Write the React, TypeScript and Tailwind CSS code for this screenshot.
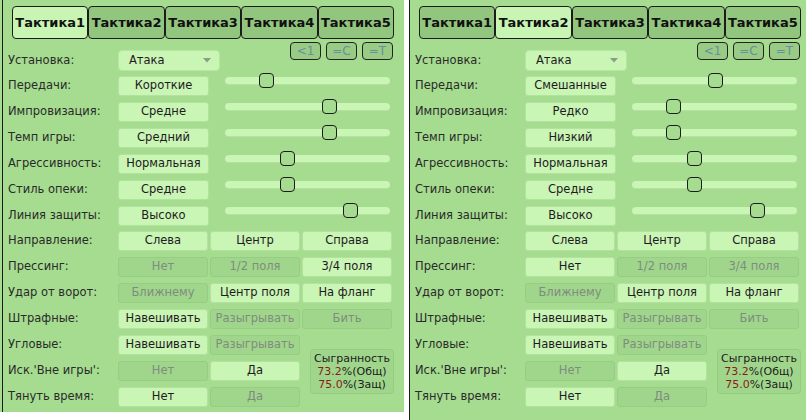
import React from "react";

type Btn = [string, boolean];

type PanelData = {
  active: number;
  upper: { label: string; value: string; pos: number }[];
  lower: { label: string; btns: Btn[] }[];
};

const LIGHT =
  "bg-[#c9f5b5] border border-[#b3e29f] text-[#1f1a1f]";
const DIS =
  "bg-[#a0d68b] border border-[#97cc83] text-[#7f8c7f]";

const left: PanelData = {
  active: 0,
  upper: [
    { label: "Передачи:", value: "Короткие", pos: 0 },
    { label: "Импровизация:", value: "Средне", pos: 3 },
    { label: "Темп игры:", value: "Средний", pos: 3 },
    { label: "Агрессивность:", value: "Нормальная", pos: 1 },
    { label: "Стиль опеки:", value: "Средне", pos: 1 },
    { label: "Линия защиты:", value: "Высоко", pos: 4 },
  ],
  lower: [
    { label: "Направление:", btns: [["Слева", true], ["Центр", true], ["Справа", true]] },
    { label: "Прессинг:", btns: [["Нет", false], ["1/2 поля", false], ["3/4 поля", true]] },
    { label: "Удар от ворот:", btns: [["Ближнему", false], ["Центр поля", true], ["На фланг", true]] },
    { label: "Штрафные:", btns: [["Навешивать", true], ["Разыгрывать", false], ["Бить", false]] },
    { label: "Угловые:", btns: [["Навешивать", true], ["Разыгрывать", false]] },
    { label: "Иск.'Вне игры':", btns: [["Нет", false], ["Да", true]] },
    { label: "Тянуть время:", btns: [["Нет", true], ["Да", false]] },
  ],
};

const right: PanelData = {
  active: 1,
  upper: [
    { label: "Передачи:", value: "Смешанные", pos: 2 },
    { label: "Импровизация:", value: "Редко", pos: 0 },
    { label: "Темп игры:", value: "Низкий", pos: 0 },
    { label: "Агрессивность:", value: "Нормальная", pos: 1 },
    { label: "Стиль опеки:", value: "Средне", pos: 1 },
    { label: "Линия защиты:", value: "Высоко", pos: 4 },
  ],
  lower: [
    { label: "Направление:", btns: [["Слева", true], ["Центр", true], ["Справа", true]] },
    { label: "Прессинг:", btns: [["Нет", true], ["1/2 поля", false], ["3/4 поля", false]] },
    { label: "Удар от ворот:", btns: [["Ближнему", false], ["Центр поля", true], ["На фланг", true]] },
    { label: "Штрафные:", btns: [["Навешивать", true], ["Разыгрывать", false], ["Бить", false]] },
    { label: "Угловые:", btns: [["Навешивать", true], ["Разыгрывать", false]] },
    { label: "Иск.'Вне игры':", btns: [["Нет", false], ["Да", true]] },
    { label: "Тянуть время:", btns: [["Нет", true], ["Да", false]] },
  ],
};

function Panel({ data }: { data: PanelData }) {
  return (
    <div className="w-[396px] pt-[6px] text-[11.5px] leading-none">
      {/* tabs */}
      <div className="flex ml-[9px] mr-[5px] h-[33px]">
        {[1, 2, 3, 4, 5].map((n, i) => (
          <div
            key={n}
            className={
              "flex-1 flex items-center justify-center border border-[#1c1c1c] rounded-[4px] text-[13px] font-bold text-[#111] " +
              (i === data.active ? "bg-[#c8f5b4]" : "bg-[#92c57e]")
            }
          >
            Тактика{n}
          </div>
        ))}
      </div>

      {/* setup row */}
      <div className="flex items-center h-[21px] mt-[11px] pl-[5px]">
        <div className="w-[110px] text-[#2a2a2a]">Установка:</div>
        <div className="w-[102px] h-[21px] rounded-[4px] bg-[#c9f5b5] border border-[#b8e5a4] flex items-center pl-[10px] pr-[8px] text-[#1f1a1f]">
          <span className="flex-1">Атака</span>
          <svg width="8" height="5" viewBox="0 0 8 5">
            <polygon points="0,0 8,0 4,4.5" fill="#8c9b8c" />
          </svg>
        </div>
        <div className="ml-auto mr-[6px] self-start -mt-[8px] flex gap-[5px]">
          {["<1", "=С", "=Т"].map((t) => (
            <div
              key={t}
              className="w-[31px] h-[18px] rounded-[4px] border border-[#222] bg-[#98cc85] text-[#6b8da0] text-[12px] flex items-center justify-center"
            >
              {t}
            </div>
          ))}
        </div>
      </div>

      {/* slider rows */}
      <div className="flex flex-col gap-[6px] mt-[5px] pl-[5px]">
        {data.upper.map((r) => (
          <div key={r.label} className="flex items-center h-[20px]">
            <div className="w-[110px] text-[#2a2a2a]">{r.label}</div>
            <div className={"w-[91px] h-[20px] rounded-[3px] flex items-center justify-center " + LIGHT}>
              {r.value}
            </div>
            <div className="relative ml-[16px] w-[165px] h-[20px]">
              <div className="absolute left-0 right-0 top-[1px] h-[8px] rounded-full bg-[#c9f5b5] border-b border-[#b5e2a1]" />
              <div
                className="absolute top-[-3px] w-[15px] h-[15px] rounded-[4px] border border-[#1c1c1c] bg-[#a6dc90]"
                style={{ left: 34 + r.pos * 21 }}
              />
            </div>
          </div>
        ))}
      </div>

      {/* button grid */}
      <div className="grid grid-cols-[108px_90px_90px_90px] gap-x-[2px] gap-y-[6px] mt-[5px] pl-[5px] auto-rows-[20px]">
        {data.lower.map((r, ri) => (
          <React.Fragment key={r.label}>
            <div className="flex items-center text-[#2a2a2a] whitespace-nowrap" style={{ gridRow: ri + 1, gridColumn: 1 }}>
              {r.label}
            </div>
            {r.btns.map(([t, on], bi) => (
              <div
                key={bi}
                className={"rounded-[3px] flex items-center justify-center " + (on ? LIGHT : DIS)}
                style={{ gridRow: ri + 1, gridColumn: bi + 2 }}
              >
                {t}
              </div>
            ))}
          </React.Fragment>
        ))}
        <div className="col-start-4 row-start-5 row-span-3 self-center justify-self-end -mr-[2px] w-[84px] h-[45px] rounded-[4px] bg-[#a0d68b] border border-[#95ca81] flex flex-col items-center justify-center text-[11px] leading-[13px] text-[#1c1c1c]">
          <div>Сыгранность</div>
          <div>
            {" "}
            <span className="text-[#8b1a1a]">73.2</span>%(Общ)
          </div>
          <div>
            <span className="text-[#8b1a1a]">75.0</span>%(Защ)
          </div>
        </div>
      </div>
    </div>
  );
}

export default function App() {
  return (
    <div className="w-[806px] h-[420px] bg-white flex font-['DejaVu_Sans',sans-serif] overflow-hidden">
      <div className="w-[404px] h-[412px] bg-[#a6dc90] pl-[2px] shrink-0">
        <div className="h-full border-l border-[#1c1c1c]">
          <Panel data={left} />
        </div>
      </div>
      <div className="ml-[5px] flex-1 h-[420px] bg-[#a6dc90] border-l border-[#1c1c1c]">
        <Panel data={right} />
      </div>
    </div>
  );
}
